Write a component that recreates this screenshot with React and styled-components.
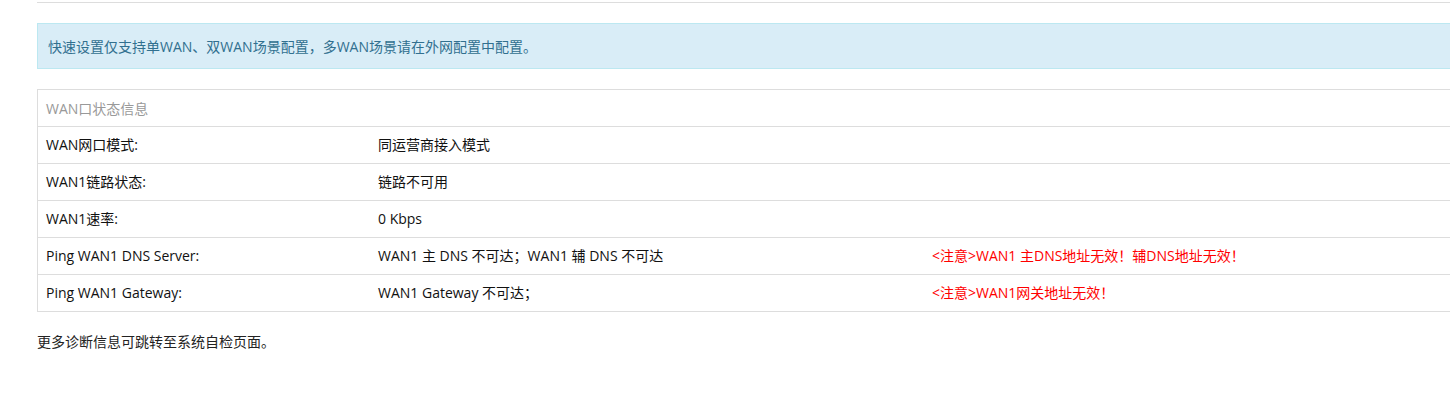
import styled, { createGlobalStyle } from "styled-components";

const rows = [
  { label: "WAN网口模式:", value: "同运营商接入模式", note: "" },
  { label: "WAN1链路状态:", value: "链路不可用", note: "" },
  { label: "WAN1速率:", value: "0 Kbps", note: "" },
  {
    label: "Ping WAN1 DNS Server:",
    value: "WAN1 主 DNS 不可达；WAN1 辅 DNS 不可达",
    note: "<注意>WAN1 主DNS地址无效！辅DNS地址无效！",
  },
  {
    label: "Ping WAN1 Gateway:",
    value: "WAN1 Gateway 不可达；",
    note: "<注意>WAN1网关地址无效！",
  },
];

export default function App() {
  return (
    <>
      <GlobalStyle />
      <Page>
        <TopRule />
        <InfoBox>快速设置仅支持单WAN、双WAN场景配置，多WAN场景请在外网配置中配置。</InfoBox>
        <StatusTable>
          <HeaderRow>WAN口状态信息</HeaderRow>
          {rows.map((r) => (
            <Row key={r.label}>
              <Cell>{r.label}</Cell>
              <Cell>{r.value}</Cell>
              <Cell $warn>{r.note}</Cell>
            </Row>
          ))}
        </StatusTable>
        <Footnote>更多诊断信息可跳转至系统自检页面。</Footnote>
      </Page>
    </>
  );
}

const GlobalStyle = createGlobalStyle`
  body {
    margin: 0;
    overflow: hidden;
    background: #fff;
    font-family: "Open Sans", "Noto Sans CJK SC", sans-serif;
    font-size: 14px;
    color: #333;
  }
`;

const Page = styled.div`
  width: 1480px;
  padding-left: 37px;
`;

const TopRule = styled.div`
  height: 2px;
  border-bottom: 1px solid #ddd;
`;

const InfoBox = styled.div`
  margin-top: 20px;
  height: 44px;
  padding-left: 10px;
  display: flex;
  align-items: center;
  background: #d9edf7;
  border: 1px solid #bce8f1;
  color: #31708f;
`;

const StatusTable = styled.div`
  margin-top: 20px;
  border: 1px solid #ddd;
  border-top: none;
`;

const HeaderRow = styled.div`
  height: 36px;
  border-top: 1px solid #ddd;
  padding-left: 8px;
  display: flex;
  align-items: center;
  color: #999;
`;

const Row = styled.div`
  height: 36px;
  border-top: 1px solid #ddd;
  display: grid;
  grid-template-columns: 332px 554px 1fr;
  align-items: center;
  color: #111;
  line-height: 18px;
`;

const Cell = styled.div`
  padding-left: 8px;
  white-space: nowrap;
  padding-bottom: 1px;
  color: ${(p) => (p.$warn ? "#ff0000" : "inherit")};
`;

const Footnote = styled.div`
  margin-top: 20px;
  line-height: 20px;
  color: #222;
`;
